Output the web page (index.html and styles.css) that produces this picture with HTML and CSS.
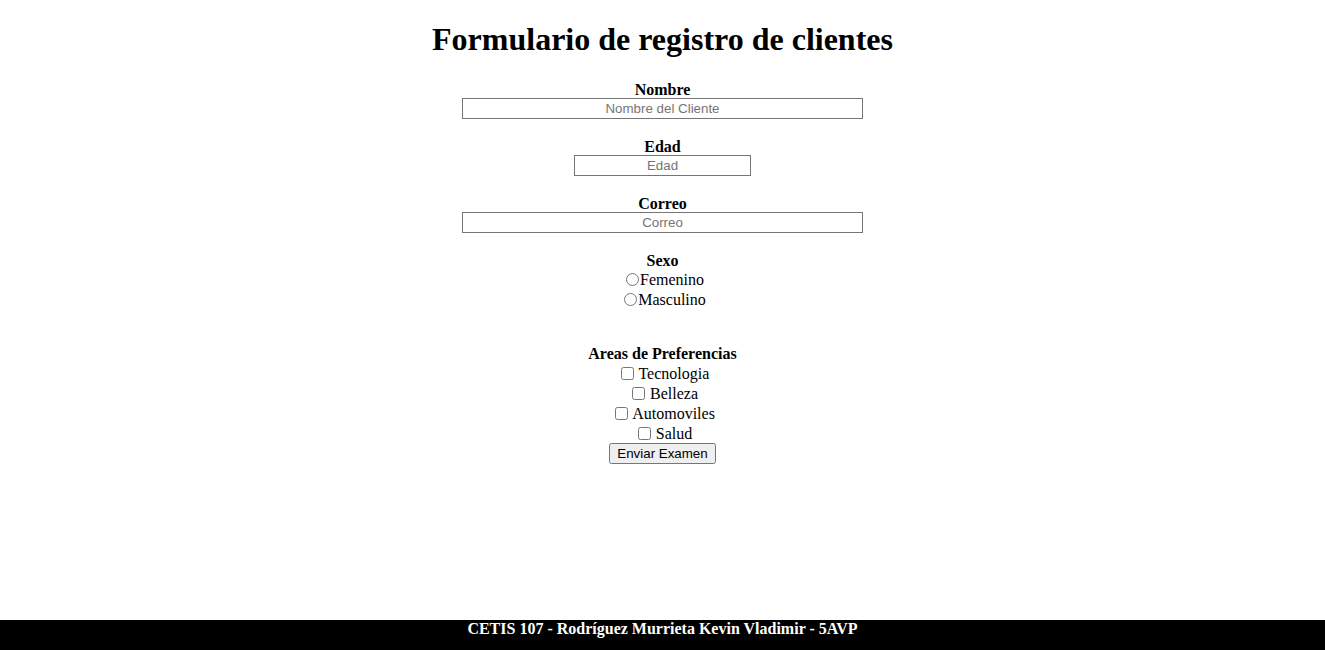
FILE: index.html
```html
<!doctype html>
<html lang="es">

<head>
  <meta charset="utf-8">
  <title>Registro de clientes</title>
  <meta name="viewport" content="width=device-width, initial-scale=1">
  <link rel="stylesheet" href="styles.css">
</head>

<body>
  <div class="page">
    <main>
      <h1>Formulario de registro de clientes</h1>
      <form>
        <div class="field">
          <label class="title" for="nombre">Nombre</label>
          <input type="text" id="nombre" class="wide" placeholder="Nombre del Cliente">
        </div>

        <div class="field">
          <label class="title" for="edad">Edad</label>
          <input type="text" id="edad" class="short" placeholder="Edad">
        </div>

        <div class="field">
          <label class="title" for="correo">Correo</label>
          <input type="email" id="correo" class="wide" placeholder="Correo">
        </div>

        <div class="field group">
          <span class="title">Sexo</span>
          <div class="option"><input type="radio" name="sexo" id="fem"><label for="fem">Femenino</label></div>
          <div class="option"><input type="radio" name="sexo" id="mas"><label for="mas">Masculino</label></div>
        </div>

        <div class="field prefs">
          <span class="title">Areas de Preferencias</span>
          <div class="option"><input type="checkbox" id="tec"> <label for="tec">Tecnologia</label></div>
          <div class="option"><input type="checkbox" id="bel"> <label for="bel">Belleza</label></div>
          <div class="option"><input type="checkbox" id="aut"> <label for="aut">Automoviles</label></div>
          <div class="option"><input type="checkbox" id="sal"> <label for="sal">Salud</label></div>
          <button type="submit">Enviar Examen</button>
        </div>
      </form>
    </main>

    <footer>CETIS 107 - Rodríguez Murrieta Kevin Vladimir - 5AVP</footer>
  </div>
</body>
</html>
```

FILE: styles.css
```css
body {
  margin: 0;
  font-family: "Liberation Serif", "Times New Roman", serif;
  font-size: 16px;
  color: #000;
}

.page {
  min-height: 100vh;
  display: flex;
  flex-direction: column;
  text-align: center;
}

h1 {
  font-size: 32px;
  margin: 21.44px 0;
}

form {
  margin: 0;
}

.field {
  margin-bottom: 18px;
}

.field .title {
  display: block;
  font-weight: bold;
  padding-top: 1px;
  margin-bottom: -1px;
}

input[type=text], input[type=email] {
  display: block;
  margin: 0 auto;
  box-sizing: border-box;
  height: 21px;
  font-family: Arial, "Liberation Sans", sans-serif;
  font-size: 13.33px;
  text-align: center;
  border: 1px solid #767676;
  padding: 1px 2px;
}

input::placeholder {
  color: #757575;
}

.wide {
  width: 401px;
}

.short {
  width: 177px;
}

.group {
  margin-bottom: 34px;
}

.option {
  height: 20px;
  line-height: 20px;
}

.option input {
  margin: 3px 1px 0 5px;
  vertical-align: -1px;
}

.group .option:first-of-type {
  margin-top: 1px;
}

.prefs .option:first-of-type {
  margin-top: 2px;
}

.prefs {
  margin-bottom: 0;
}

button {
  font-family: Arial, "Liberation Sans", sans-serif;
  font-size: 13.33px;
  padding: 1px 6px;
  height: 21px;
  margin-top: -1px;
}

footer {
  margin-top: auto;
  height: 30px;
  background-color: #000;
  color: #fff;
  font-weight: bold;
}
```
